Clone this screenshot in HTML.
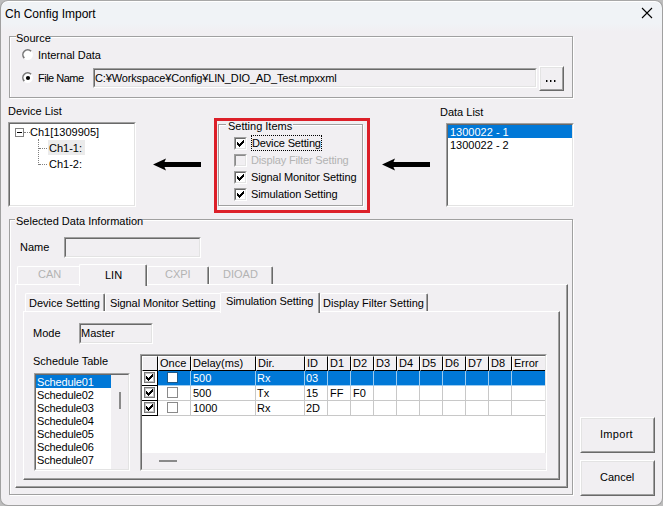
<!DOCTYPE html>
<html><head><meta charset="utf-8">
<style>
*{box-sizing:border-box;margin:0;padding:0}
html,body{width:663px;height:506px;overflow:hidden;background:#bdbdbd}
body{position:relative;font-family:"Liberation Sans",sans-serif;font-size:11px;color:#000}
.a{position:absolute}
.t{position:absolute;white-space:pre;line-height:13px;height:13px}
.win{position:absolute;left:0;top:0;width:663px;height:506px;background:linear-gradient(#f0f3f6 0px,#f0f3f6 23px,#f1eff2 30px);border:1px solid #a0a0a0;border-top-color:#a8a8a8;border-radius:8px;box-shadow:inset 0 1px 0 #fff}
.gs{position:absolute;border:1px solid #a0a0a0}
.gh{position:absolute;border:1px solid #fff}
.lbl{position:absolute;background:#f1eff2;white-space:pre;line-height:13px;height:13px;padding:0 2px 0 2px}
.sunk{position:absolute;border-top:1px solid #a0a0a0;border-left:1px solid #a0a0a0;border-right:1px solid #fff;border-bottom:1px solid #fff}
.sunk>.in{position:absolute;left:0;top:0;right:0;bottom:0;border-top:1px solid #696969;border-left:1px solid #696969;border-right:1px solid #e3e3e3;border-bottom:1px solid #e3e3e3}
.rais{position:absolute;border-top:1px solid #fff;border-left:1px solid #fff;border-right:1px solid #696969;border-bottom:1px solid #696969}
.rais>.in{position:absolute;left:0;top:0;right:0;bottom:0;border-top:1px solid #e3e3e3;border-left:1px solid #e3e3e3;border-right:1px solid #a0a0a0;border-bottom:1px solid #a0a0a0}
.chk{position:absolute;width:13px;height:13px;border-top:1px solid #a0a0a0;border-left:1px solid #a0a0a0;border-right:1px solid #fff;border-bottom:1px solid #fff}
.chk>.in{position:absolute;left:0;top:0;right:0;bottom:0;background:#fff;border-top:1px solid #696969;border-left:1px solid #696969;border-right:1px solid #e3e3e3;border-bottom:1px solid #e3e3e3}
.chk svg{position:absolute;left:2px;top:2px}
.dis{color:#b3b3b3}
.tab{position:absolute;border-top:1px solid #fff;border-left:1px solid #fff;border-right:1px solid #696969;border-radius:2px 2px 0 0}
.tab>.in{position:absolute;left:0;top:0;right:0;bottom:0;border-right:1px solid #a0a0a0}
.tbody{position:absolute;border-top:1px solid #fff;border-left:1px solid #fff;border-right:1px solid #696969;border-bottom:1px solid #696969}
.tbody>.in{position:absolute;left:0;top:0;right:0;bottom:0;border-right:1px solid #a0a0a0;border-bottom:1px solid #a0a0a0}
.sel{background:#0078d7;color:#fff}
</style></head><body>
<div class="win"></div>

<!-- title -->
<div class="t" style="left:5px;top:7px;font-size:12px;line-height:14px;height:14px">Ch Config Import</div>
<svg class="a" style="left:641px;top:7px" width="12" height="12"><path d="M1 1L11 11M11 1L1 11" stroke="#000" stroke-width="1.1"/></svg>

<!-- Source group -->
<div class="gh" style="left:10px;top:37px;width:564px;height:62px"></div>
<div class="gs" style="left:9px;top:36px;width:564px;height:62px"></div>
<div class="lbl" style="left:16px;top:32px;width:34px;padding:0;overflow:visible">Source</div>

<svg class="a" style="left:22px;top:49px" width="12" height="12"><circle cx="5.7" cy="5.7" r="5.2" fill="#fff"/><path d="M2.3 9.1A4.8 4.8 0 0 1 9.1 2.3" stroke="#777" stroke-width="1.6" fill="none"/></svg>
<div class="t" style="left:38px;top:49px">Internal Data</div>
<svg class="a" style="left:22px;top:72px" width="12" height="12"><circle cx="5.7" cy="5.7" r="5.2" fill="#fff"/><path d="M2.3 9.1A4.8 4.8 0 0 1 9.1 2.3" stroke="#777" stroke-width="1.6" fill="none"/><circle cx="6" cy="6" r="2.1" fill="#000"/></svg>
<div class="t" style="left:38px;top:72px;letter-spacing:-0.5px">File Name</div>

<div class="sunk" style="left:93px;top:68px;width:444px;height:20px"><div class="in"></div></div>
<div class="t" style="left:95px;top:72px;letter-spacing:-0.14px">C:¥Workspace¥Config¥LIN_DIO_AD_Test.mpxxml</div>
<div class="rais" style="left:539px;top:66px;width:25px;height:25px"><div class="in"></div></div>
<div class="a" style="left:546px;top:80px;width:1px;height:2px;background:#000;box-shadow:1px 0 0 #8a8a8a"></div><div class="a" style="left:550px;top:80px;width:1px;height:2px;background:#000;box-shadow:1px 0 0 #8a8a8a"></div><div class="a" style="left:554px;top:80px;width:1px;height:2px;background:#000;box-shadow:1px 0 0 #8a8a8a"></div>

<!-- Device list -->
<div class="t" style="left:8px;top:105px">Device List</div>
<div class="sunk" style="left:8px;top:122px;width:128px;height:85px;background:#fff"><div class="in"></div></div>

<!-- Setting items -->

<!-- Data list -->
<div class="t" style="left:440px;top:106px">Data List</div>
<div class="sunk" style="left:446px;top:123px;width:128px;height:84px;background:#fff"><div class="in"></div></div>


<!-- tree content -->
<div class="a" style="left:15px;top:128px;width:9px;height:9px;border:1px solid #808080;background:#fff"></div>
<div class="a" style="left:17px;top:132px;width:5px;height:1px;background:#000"></div>
<div class="a" style="left:24px;top:132px;width:6px;height:1px;border-top:1px dotted #808080"></div>
<div class="t" style="left:30px;top:126px">Ch1[1309905]</div>
<div class="a" style="left:38px;top:139px;width:1px;height:26px;border-left:1px dotted #808080"></div>
<div class="a" style="left:39px;top:148px;width:8px;height:1px;border-top:1px dotted #808080"></div>
<div class="a" style="left:39px;top:164px;width:8px;height:1px;border-top:1px dotted #808080"></div>
<div class="a" style="left:48px;top:140px;width:37px;height:15px;background:#ebebeb"></div>
<div class="t" style="left:49px;top:142px">Ch1-1:</div>
<div class="t" style="left:49px;top:158px">Ch1-2:</div>

<!-- arrows -->
<svg class="a" style="left:150px;top:155px" width="55" height="20"><path d="M3 9.5L16 3.5L14.5 7H51V12H14.5L16 15.5Z" fill="#000"/></svg>
<svg class="a" style="left:379px;top:155px" width="55" height="20"><path d="M3 9.5L16 3.5L14.5 7H51V12H14.5L16 15.5Z" fill="#000"/></svg>

<!-- setting items group -->
<div class="gh" style="left:219px;top:125px;width:145px;height:82px"></div>
<div class="gs" style="left:218px;top:124px;width:145px;height:82px"></div>
<div class="lbl" style="left:226px;top:120px;width:67px;padding:0 0 0 2px;overflow:visible">Setting Items</div>

<div class="chk" style="left:234px;top:137px"><div class="in"></div><svg width="7" height="7" shape-rendering="crispEdges"><path d="M6 0h1v1h-1zM5 1h2v1h-2zM0 2h1v1h-1zM4 2h3v1h-3zM0 3h2v1h-2zM3 3h3v1h-3zM0 4h5v1h-5zM1 5h3v1h-3zM2 6h1v1h-1z" fill="#000"/></svg></div>
<div class="a" style="left:251px;top:135px;width:71px;height:16px;border:1px dotted #000"></div>
<div class="t" style="left:252px;top:137px;letter-spacing:-0.15px">Device Setting</div>
<div class="chk" style="left:234px;top:154px"><div class="in" style="background:#f1eff2;border-top-color:#8a8a8a;border-left-color:#8a8a8a"></div></div>
<div class="t dis" style="left:251px;top:154px;letter-spacing:-0.15px">Display Filter Setting</div>
<div class="chk" style="left:234px;top:171px"><div class="in"></div><svg width="7" height="7" shape-rendering="crispEdges"><path d="M6 0h1v1h-1zM5 1h2v1h-2zM0 2h1v1h-1zM4 2h3v1h-3zM0 3h2v1h-2zM3 3h3v1h-3zM0 4h5v1h-5zM1 5h3v1h-3zM2 6h1v1h-1z" fill="#000"/></svg></div>
<div class="t" style="left:251px;top:171px;letter-spacing:-0.1px">Signal Monitor Setting</div>
<div class="chk" style="left:234px;top:188px"><div class="in"></div><svg width="7" height="7" shape-rendering="crispEdges"><path d="M6 0h1v1h-1zM5 1h2v1h-2zM0 2h1v1h-1zM4 2h3v1h-3zM0 3h2v1h-2zM3 3h3v1h-3zM0 4h5v1h-5zM1 5h3v1h-3zM2 6h1v1h-1z" fill="#000"/></svg></div>
<div class="t" style="left:251px;top:188px;letter-spacing:-0.12px">Simulation Setting</div>

<div class="a" style="left:214px;top:118px;width:156px;height:95px;border:3px solid #dc1f28"></div>
<!-- data list items -->
<div class="a sel" style="left:448px;top:125px;width:124px;height:13px"></div>
<div class="t" style="left:450px;top:126px;color:#fff">1300022 - 1</div>
<div class="t" style="left:450px;top:139px">1300022 - 2</div>

<!-- Selected data info group -->
<div class="gh" style="left:10px;top:220px;width:564px;height:276px"></div>
<div class="gs" style="left:9px;top:219px;width:564px;height:276px"></div>
<div class="lbl" style="left:15px;top:215px;width:127px;padding:0 0 0 1px;overflow:visible">Selected Data Information</div>

<div class="t" style="left:20px;top:241px">Name</div>
<div class="sunk" style="left:64px;top:237px;width:137px;height:21px"><div class="in"></div></div>
<div class="tbody" style="left:15px;top:284px;width:553px;height:204px"><div class="in"></div></div>
<div class="a" style="left:17px;top:266px;width:63px;height:18px;border-top:1px solid #fff;border-left:1px solid #fff;border-radius:2px 0 0 0"></div>
<div class="t dis" style="left:38px;top:268px">CAN</div>
<div class="tab" style="left:147px;top:266px;width:62px;height:18px"><div class="in"></div></div>
<div class="t dis" style="left:165px;top:268px">CXPI</div>
<div class="tab" style="left:209px;top:266px;width:64px;height:18px"><div class="in"></div></div>
<div class="t dis" style="left:223px;top:268px">DIOAD</div>
<div class="tab" style="left:79px;top:264px;width:68px;height:22px;background:#f1eff2;border-bottom:none"><div class="in"></div></div>
<div class="t" style="left:105px;top:269px">LIN</div>
<div class="tbody" style="left:23px;top:311px;width:537px;height:169px"><div class="in"></div></div>
<div class="tab" style="left:25px;top:293px;width:80px;height:18px"><div class="in"></div></div>
<div class="t" style="left:29px;top:297px">Device Setting</div>
<div class="a" style="left:105px;top:293px;width:115px;height:18px;border-top:1px solid #fff;border-left:1px solid #fff;border-radius:2px 0 0 0"></div>
<div class="t" style="left:110px;top:297px;letter-spacing:-0.1px">Signal Monitor Setting</div>
<div class="tab" style="left:320px;top:293px;width:108px;height:18px"><div class="in"></div></div>
<div class="t" style="left:323px;top:297px">Display Filter Setting</div>
<div class="tab" style="left:220px;top:292px;width:100px;height:21px;background:#f1eff2"><div class="in"></div></div>
<div class="t" style="left:226px;top:295px;letter-spacing:-0.08px">Simulation Setting</div>
<div class="t" style="left:33px;top:327px">Mode</div>
<div class="sunk" style="left:79px;top:323px;width:74px;height:21px"><div class="in"></div></div>
<div class="t" style="left:81px;top:327px">Master</div>
<div class="t" style="left:33px;top:355px">Schedule Table</div>
<div class="sunk" style="left:34px;top:373px;width:96px;height:98px;background:#fff;overflow:hidden"><div class="in" style="overflow:hidden">
<div class="a" style="left:0;top:0;width:75px;height:13px;background:#0078d7"></div>
<div class="t" style="left:1px;top:1px;color:#fff;letter-spacing:-0.15px">Schedule01</div>
<div class="t" style="left:1px;top:14px;color:#000;letter-spacing:-0.15px">Schedule02</div>
<div class="t" style="left:1px;top:27px;color:#000;letter-spacing:-0.15px">Schedule03</div>
<div class="t" style="left:1px;top:40px;color:#000;letter-spacing:-0.15px">Schedule04</div>
<div class="t" style="left:1px;top:53px;color:#000;letter-spacing:-0.15px">Schedule05</div>
<div class="t" style="left:1px;top:66px;color:#000;letter-spacing:-0.15px">Schedule06</div>
<div class="t" style="left:1px;top:79px;color:#000;letter-spacing:-0.15px">Schedule07</div>
<div class="t" style="left:1px;top:92px;color:#000;letter-spacing:-0.15px">Schedule08</div>
<div class="a" style="left:75px;top:0;width:18px;height:94px;background:#f1eff2"></div>
<div class="a" style="left:83px;top:17px;width:2px;height:17px;background:#8a8a8a"></div>
</div></div>
<div class="sunk" style="left:140px;top:354px;width:407px;height:117px;background:#fff"><div class="in"></div></div>
<div class="a" style="left:142px;top:453px;width:404px;height:16px;background:#f1eff2"></div>
<div class="a" style="left:159px;top:460px;width:18px;height:2px;background:#8a8a8a"></div>
<div class="a" style="left:142px;top:356px;width:16px;height:15px;background:#f1eff2;border-top:1px solid #fff;border-left:1px solid #fff;border-right:1px solid #000;border-bottom:1px solid #000"></div>
<div class="a" style="left:158px;top:356px;width:33px;height:15px;background:#f1eff2;border-top:1px solid #fff;border-left:1px solid #fff;border-right:1px solid #000;border-bottom:1px solid #000"></div>
<div class="t" style="left:160px;top:357px">Once</div>
<div class="a" style="left:191px;top:356px;width:65px;height:15px;background:#f1eff2;border-top:1px solid #fff;border-left:1px solid #fff;border-right:1px solid #000;border-bottom:1px solid #000"></div>
<div class="t" style="left:193px;top:357px">Delay(ms)</div>
<div class="a" style="left:256px;top:356px;width:49px;height:15px;background:#f1eff2;border-top:1px solid #fff;border-left:1px solid #fff;border-right:1px solid #000;border-bottom:1px solid #000"></div>
<div class="t" style="left:258px;top:357px">Dir.</div>
<div class="a" style="left:305px;top:356px;width:23px;height:15px;background:#f1eff2;border-top:1px solid #fff;border-left:1px solid #fff;border-right:1px solid #000;border-bottom:1px solid #000"></div>
<div class="t" style="left:307px;top:357px">ID</div>
<div class="a" style="left:328px;top:356px;width:23px;height:15px;background:#f1eff2;border-top:1px solid #fff;border-left:1px solid #fff;border-right:1px solid #000;border-bottom:1px solid #000"></div>
<div class="t" style="left:330px;top:357px">D1</div>
<div class="a" style="left:351px;top:356px;width:23px;height:15px;background:#f1eff2;border-top:1px solid #fff;border-left:1px solid #fff;border-right:1px solid #000;border-bottom:1px solid #000"></div>
<div class="t" style="left:353px;top:357px">D2</div>
<div class="a" style="left:374px;top:356px;width:23px;height:15px;background:#f1eff2;border-top:1px solid #fff;border-left:1px solid #fff;border-right:1px solid #000;border-bottom:1px solid #000"></div>
<div class="t" style="left:376px;top:357px">D3</div>
<div class="a" style="left:397px;top:356px;width:23px;height:15px;background:#f1eff2;border-top:1px solid #fff;border-left:1px solid #fff;border-right:1px solid #000;border-bottom:1px solid #000"></div>
<div class="t" style="left:399px;top:357px">D4</div>
<div class="a" style="left:420px;top:356px;width:23px;height:15px;background:#f1eff2;border-top:1px solid #fff;border-left:1px solid #fff;border-right:1px solid #000;border-bottom:1px solid #000"></div>
<div class="t" style="left:422px;top:357px">D5</div>
<div class="a" style="left:443px;top:356px;width:23px;height:15px;background:#f1eff2;border-top:1px solid #fff;border-left:1px solid #fff;border-right:1px solid #000;border-bottom:1px solid #000"></div>
<div class="t" style="left:445px;top:357px">D6</div>
<div class="a" style="left:466px;top:356px;width:23px;height:15px;background:#f1eff2;border-top:1px solid #fff;border-left:1px solid #fff;border-right:1px solid #000;border-bottom:1px solid #000"></div>
<div class="t" style="left:468px;top:357px">D7</div>
<div class="a" style="left:489px;top:356px;width:23px;height:15px;background:#f1eff2;border-top:1px solid #fff;border-left:1px solid #fff;border-right:1px solid #000;border-bottom:1px solid #000"></div>
<div class="t" style="left:491px;top:357px">D8</div>
<div class="a" style="left:512px;top:356px;width:33px;height:15px;background:#f1eff2;border-top:1px solid #fff;border-left:1px solid #fff;border-bottom:1px solid #000"></div>
<div class="t" style="left:514px;top:357px">Error</div>
<div class="a" style="left:142px;top:371px;width:16px;height:15px;background:#fff;border-right:1px solid #000;border-bottom:1px solid #000"></div>
<div class="a" style="left:144px;top:372px;width:11px;height:11px;border:1px solid #7a7a7a;box-shadow:inset 0 0 0 1px #c4c4c4;background:#fff"></div>
<svg class="a" style="left:146px;top:374px" width="7" height="7" shape-rendering="crispEdges"><path d="M6 0h1v1h-1zM5 1h2v1h-2zM0 2h1v1h-1zM4 2h3v1h-3zM0 3h2v1h-2zM3 3h3v1h-3zM0 4h5v1h-5zM1 5h3v1h-3zM2 6h1v1h-1z" fill="#000"/></svg>
<div class="a" style="left:158px;top:371px;width:33px;height:15px;background:#0078d7;border-right:1px solid #9ccbf0;border-bottom:1px solid #9ccbf0"></div>
<div class="a" style="left:191px;top:371px;width:65px;height:15px;background:#0078d7;border-right:1px solid #9ccbf0;border-bottom:1px solid #9ccbf0"></div>
<div class="a" style="left:256px;top:371px;width:49px;height:15px;background:#0078d7;border-right:1px solid #9ccbf0;border-bottom:1px solid #9ccbf0"></div>
<div class="a" style="left:305px;top:371px;width:23px;height:15px;background:#0078d7;border-right:1px solid #9ccbf0;border-bottom:1px solid #9ccbf0"></div>
<div class="a" style="left:328px;top:371px;width:23px;height:15px;background:#0078d7;border-right:1px solid #9ccbf0;border-bottom:1px solid #9ccbf0"></div>
<div class="a" style="left:351px;top:371px;width:23px;height:15px;background:#0078d7;border-right:1px solid #9ccbf0;border-bottom:1px solid #9ccbf0"></div>
<div class="a" style="left:374px;top:371px;width:23px;height:15px;background:#0078d7;border-right:1px solid #9ccbf0;border-bottom:1px solid #9ccbf0"></div>
<div class="a" style="left:397px;top:371px;width:23px;height:15px;background:#0078d7;border-right:1px solid #9ccbf0;border-bottom:1px solid #9ccbf0"></div>
<div class="a" style="left:420px;top:371px;width:23px;height:15px;background:#0078d7;border-right:1px solid #9ccbf0;border-bottom:1px solid #9ccbf0"></div>
<div class="a" style="left:443px;top:371px;width:23px;height:15px;background:#0078d7;border-right:1px solid #9ccbf0;border-bottom:1px solid #9ccbf0"></div>
<div class="a" style="left:466px;top:371px;width:23px;height:15px;background:#0078d7;border-right:1px solid #9ccbf0;border-bottom:1px solid #9ccbf0"></div>
<div class="a" style="left:489px;top:371px;width:23px;height:15px;background:#0078d7;border-right:1px solid #9ccbf0;border-bottom:1px solid #9ccbf0"></div>
<div class="a" style="left:512px;top:371px;width:33px;height:15px;background:#0078d7;border-bottom:1px solid #9ccbf0"></div>
<div class="a" style="left:167px;top:372px;width:11px;height:11px;border:1px solid #1c5a8c;background:#fff"></div>
<div class="t" style="left:193px;top:372px;color:#fff">500</div>
<div class="t" style="left:257px;top:372px;color:#fff">Rx</div>
<div class="t" style="left:306px;top:372px;color:#fff">03</div>
<div class="a" style="left:142px;top:386px;width:16px;height:15px;background:#fff;border-right:1px solid #000;border-bottom:1px solid #000"></div>
<div class="a" style="left:144px;top:387px;width:11px;height:11px;border:1px solid #7a7a7a;box-shadow:inset 0 0 0 1px #c4c4c4;background:#fff"></div>
<svg class="a" style="left:146px;top:389px" width="7" height="7" shape-rendering="crispEdges"><path d="M6 0h1v1h-1zM5 1h2v1h-2zM0 2h1v1h-1zM4 2h3v1h-3zM0 3h2v1h-2zM3 3h3v1h-3zM0 4h5v1h-5zM1 5h3v1h-3zM2 6h1v1h-1z" fill="#000"/></svg>
<div class="a" style="left:158px;top:386px;width:33px;height:15px;background:#fff;border-right:1px solid #c8c8c8;border-bottom:1px solid #c8c8c8"></div>
<div class="a" style="left:191px;top:386px;width:65px;height:15px;background:#fff;border-right:1px solid #c8c8c8;border-bottom:1px solid #c8c8c8"></div>
<div class="a" style="left:256px;top:386px;width:49px;height:15px;background:#fff;border-right:1px solid #c8c8c8;border-bottom:1px solid #c8c8c8"></div>
<div class="a" style="left:305px;top:386px;width:23px;height:15px;background:#fff;border-right:1px solid #c8c8c8;border-bottom:1px solid #c8c8c8"></div>
<div class="a" style="left:328px;top:386px;width:23px;height:15px;background:#fff;border-right:1px solid #c8c8c8;border-bottom:1px solid #c8c8c8"></div>
<div class="a" style="left:351px;top:386px;width:23px;height:15px;background:#fff;border-right:1px solid #c8c8c8;border-bottom:1px solid #c8c8c8"></div>
<div class="a" style="left:374px;top:386px;width:23px;height:15px;background:#fff;border-right:1px solid #c8c8c8;border-bottom:1px solid #c8c8c8"></div>
<div class="a" style="left:397px;top:386px;width:23px;height:15px;background:#fff;border-right:1px solid #c8c8c8;border-bottom:1px solid #c8c8c8"></div>
<div class="a" style="left:420px;top:386px;width:23px;height:15px;background:#fff;border-right:1px solid #c8c8c8;border-bottom:1px solid #c8c8c8"></div>
<div class="a" style="left:443px;top:386px;width:23px;height:15px;background:#fff;border-right:1px solid #c8c8c8;border-bottom:1px solid #c8c8c8"></div>
<div class="a" style="left:466px;top:386px;width:23px;height:15px;background:#fff;border-right:1px solid #c8c8c8;border-bottom:1px solid #c8c8c8"></div>
<div class="a" style="left:489px;top:386px;width:23px;height:15px;background:#fff;border-right:1px solid #c8c8c8;border-bottom:1px solid #c8c8c8"></div>
<div class="a" style="left:512px;top:386px;width:33px;height:15px;background:#fff;border-bottom:1px solid #c8c8c8"></div>
<div class="a" style="left:167px;top:387px;width:11px;height:11px;border:1px solid #8a8a8a;background:#fff"></div>
<div class="t" style="left:193px;top:387px;color:#000">500</div>
<div class="t" style="left:257px;top:387px;color:#000">Tx</div>
<div class="t" style="left:306px;top:387px;color:#000">15</div>
<div class="t" style="left:330px;top:387px;color:#000">FF</div>
<div class="t" style="left:353px;top:387px;color:#000">F0</div>
<div class="a" style="left:142px;top:401px;width:16px;height:15px;background:#fff;border-right:1px solid #000;border-bottom:1px solid #000"></div>
<div class="a" style="left:144px;top:402px;width:11px;height:11px;border:1px solid #7a7a7a;box-shadow:inset 0 0 0 1px #c4c4c4;background:#fff"></div>
<svg class="a" style="left:146px;top:404px" width="7" height="7" shape-rendering="crispEdges"><path d="M6 0h1v1h-1zM5 1h2v1h-2zM0 2h1v1h-1zM4 2h3v1h-3zM0 3h2v1h-2zM3 3h3v1h-3zM0 4h5v1h-5zM1 5h3v1h-3zM2 6h1v1h-1z" fill="#000"/></svg>
<div class="a" style="left:158px;top:401px;width:33px;height:15px;background:#fff;border-right:1px solid #c8c8c8;border-bottom:1px solid #c8c8c8"></div>
<div class="a" style="left:191px;top:401px;width:65px;height:15px;background:#fff;border-right:1px solid #c8c8c8;border-bottom:1px solid #c8c8c8"></div>
<div class="a" style="left:256px;top:401px;width:49px;height:15px;background:#fff;border-right:1px solid #c8c8c8;border-bottom:1px solid #c8c8c8"></div>
<div class="a" style="left:305px;top:401px;width:23px;height:15px;background:#fff;border-right:1px solid #c8c8c8;border-bottom:1px solid #c8c8c8"></div>
<div class="a" style="left:328px;top:401px;width:23px;height:15px;background:#fff;border-right:1px solid #c8c8c8;border-bottom:1px solid #c8c8c8"></div>
<div class="a" style="left:351px;top:401px;width:23px;height:15px;background:#fff;border-right:1px solid #c8c8c8;border-bottom:1px solid #c8c8c8"></div>
<div class="a" style="left:374px;top:401px;width:23px;height:15px;background:#fff;border-right:1px solid #c8c8c8;border-bottom:1px solid #c8c8c8"></div>
<div class="a" style="left:397px;top:401px;width:23px;height:15px;background:#fff;border-right:1px solid #c8c8c8;border-bottom:1px solid #c8c8c8"></div>
<div class="a" style="left:420px;top:401px;width:23px;height:15px;background:#fff;border-right:1px solid #c8c8c8;border-bottom:1px solid #c8c8c8"></div>
<div class="a" style="left:443px;top:401px;width:23px;height:15px;background:#fff;border-right:1px solid #c8c8c8;border-bottom:1px solid #c8c8c8"></div>
<div class="a" style="left:466px;top:401px;width:23px;height:15px;background:#fff;border-right:1px solid #c8c8c8;border-bottom:1px solid #c8c8c8"></div>
<div class="a" style="left:489px;top:401px;width:23px;height:15px;background:#fff;border-right:1px solid #c8c8c8;border-bottom:1px solid #c8c8c8"></div>
<div class="a" style="left:512px;top:401px;width:33px;height:15px;background:#fff;border-bottom:1px solid #c8c8c8"></div>
<div class="a" style="left:167px;top:402px;width:11px;height:11px;border:1px solid #8a8a8a;background:#fff"></div>
<div class="t" style="left:193px;top:402px;color:#000">1000</div>
<div class="t" style="left:257px;top:402px;color:#000">Rx</div>
<div class="t" style="left:306px;top:402px;color:#000">2D</div>
<!-- buttons -->
<div class="rais" style="left:580px;top:417px;width:75px;height:36px"><div class="in"></div></div>
<div class="t" style="left:600px;top:428px;letter-spacing:0.3px">Import</div>
<div class="rais" style="left:580px;top:460px;width:75px;height:36px"><div class="in"></div></div>
<div class="t" style="left:600px;top:471px">Cancel</div>

</body></html>
